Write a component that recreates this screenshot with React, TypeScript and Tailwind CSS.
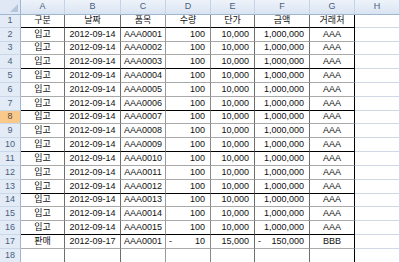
import React from 'react';

const colLetters = ['A', 'B', 'C', 'D', 'E', 'F', 'G', 'H'];
const colWidths = ['w-[44px]', 'w-[56px]', 'w-[45px]', 'w-[45px]', 'w-[44px]', 'w-[55px]', 'w-[45px]', 'w-[45px]'];
const vLines = [
  'border-r-[#6e6e6e]',
  'border-r-[#6e6e6e]',
  'border-r-[#9a9a9a]',
  'border-r-[#8a8a8a]',
  'border-r-[#6e6e6e]',
  'border-r-[#6e6e6e]',
  'border-r-black',
  'border-r-[#d0d7e5]',
];

type Row = { n: number; h: string; dark: boolean; cells: React.ReactNode[] };

const acct = (minus: boolean, v: string) => (
  <div className="flex w-full justify-between pl-[3px] pr-[5px]">
    <span>{minus ? '-' : ''}</span>
    <span>{v}</span>
  </div>
);

const rows: Row[] = [];
rows.push({
  n: 1,
  h: 'h-[13px]',
  dark: true,
  cells: ['구분', '날짜', '품목', '수량', '단가', '금액', '거래처'],
});
const heights = ['h-[14px]', 'h-[13px]', 'h-[14px]', 'h-[14px]', 'h-[14px]', 'h-[14px]', 'h-[13px]', 'h-[14px]', 'h-[14px]', 'h-[14px]', 'h-[14px]', 'h-[14px]', 'h-[13px]', 'h-[14px]', 'h-[14px]'];
for (let i = 2; i <= 16; i++) {
  rows.push({
    n: i,
    h: heights[i - 2],
    dark: i % 3 === 1,
    cells: ['입고', '2012-09-14', 'AAA' + String(i - 1).padStart(4, '0'), acct(false, '100'), acct(false, '10,000'), acct(false, '1,000,000'), 'AAA'],
  });
}
rows.push({
  n: 17,
  h: 'h-[14px]',
  dark: false,
  cells: ['판매', '2012-09-17', 'AAA0001', acct(true, '10'), acct(false, '15,000'), acct(true, '150,000'), 'BBB'],
});
rows.push({ n: 18, h: 'h-[14px]', dark: false, cells: ['', '', '', '', '', '', ''] });

export default function App() {
  return (
    <div className="w-[400px] h-[262px] overflow-hidden bg-white font-['Liberation_Sans','Noto_Sans_CJK_KR',sans-serif] text-[9px] text-[#111]">
      {/* column headers */}
      <div className="flex h-[15px]">
        <div className="w-[21px] h-full border-r border-b border-[#9eb6ce] bg-[#dfe8f4] flex items-end justify-end p-[2px]">
          <svg width="8" height="8" viewBox="0 0 8 8">
            <polygon points="8,0 8,8 0,8" fill="#b5c6dc" />
          </svg>
        </div>
        {colLetters.map((c, i) => (
          <div
            key={c}
            className={`${colWidths[i]} h-full flex items-center justify-center border-r border-b border-r-[#c5d3e6] border-b-[#9eb6ce] bg-gradient-to-b from-[#eef3fa] to-[#d9e4f2] text-[#4a5f7d] text-[9px]`}
          >
            {c}
          </div>
        ))}
      </div>
      {rows.map((r) => (
        <div key={r.n} className={`flex ${r.h}`}>
          <div
            className={`w-[21px] h-full flex items-center justify-center border-r border-b border-r-[#9eb6ce] border-b-[#c9d7e8] ${
              r.n === 8 ? 'bg-[#f9c98c] text-[#5a4a35]' : 'bg-[#e3ebf6] text-[#4a5f7d]'
            }`}
          >
            {r.n}
          </div>
          {r.cells.map((c, i) => (
            <div
              key={i}
              className={`${colWidths[i]} h-full flex items-center whitespace-nowrap overflow-hidden border-r border-b ${vLines[i]} ${
                r.dark ? 'border-b-black' : 'border-b-[#a9a9a9]'
              } ${r.n > 1 && i >= 3 && i <= 5 ? 'justify-end' : 'justify-center'}`}
            >
              {c}
            </div>
          ))}
          <div className="w-[45px] h-full border-r border-b border-[#d0d7e5]" />
        </div>
      ))}
    </div>
  );
}
